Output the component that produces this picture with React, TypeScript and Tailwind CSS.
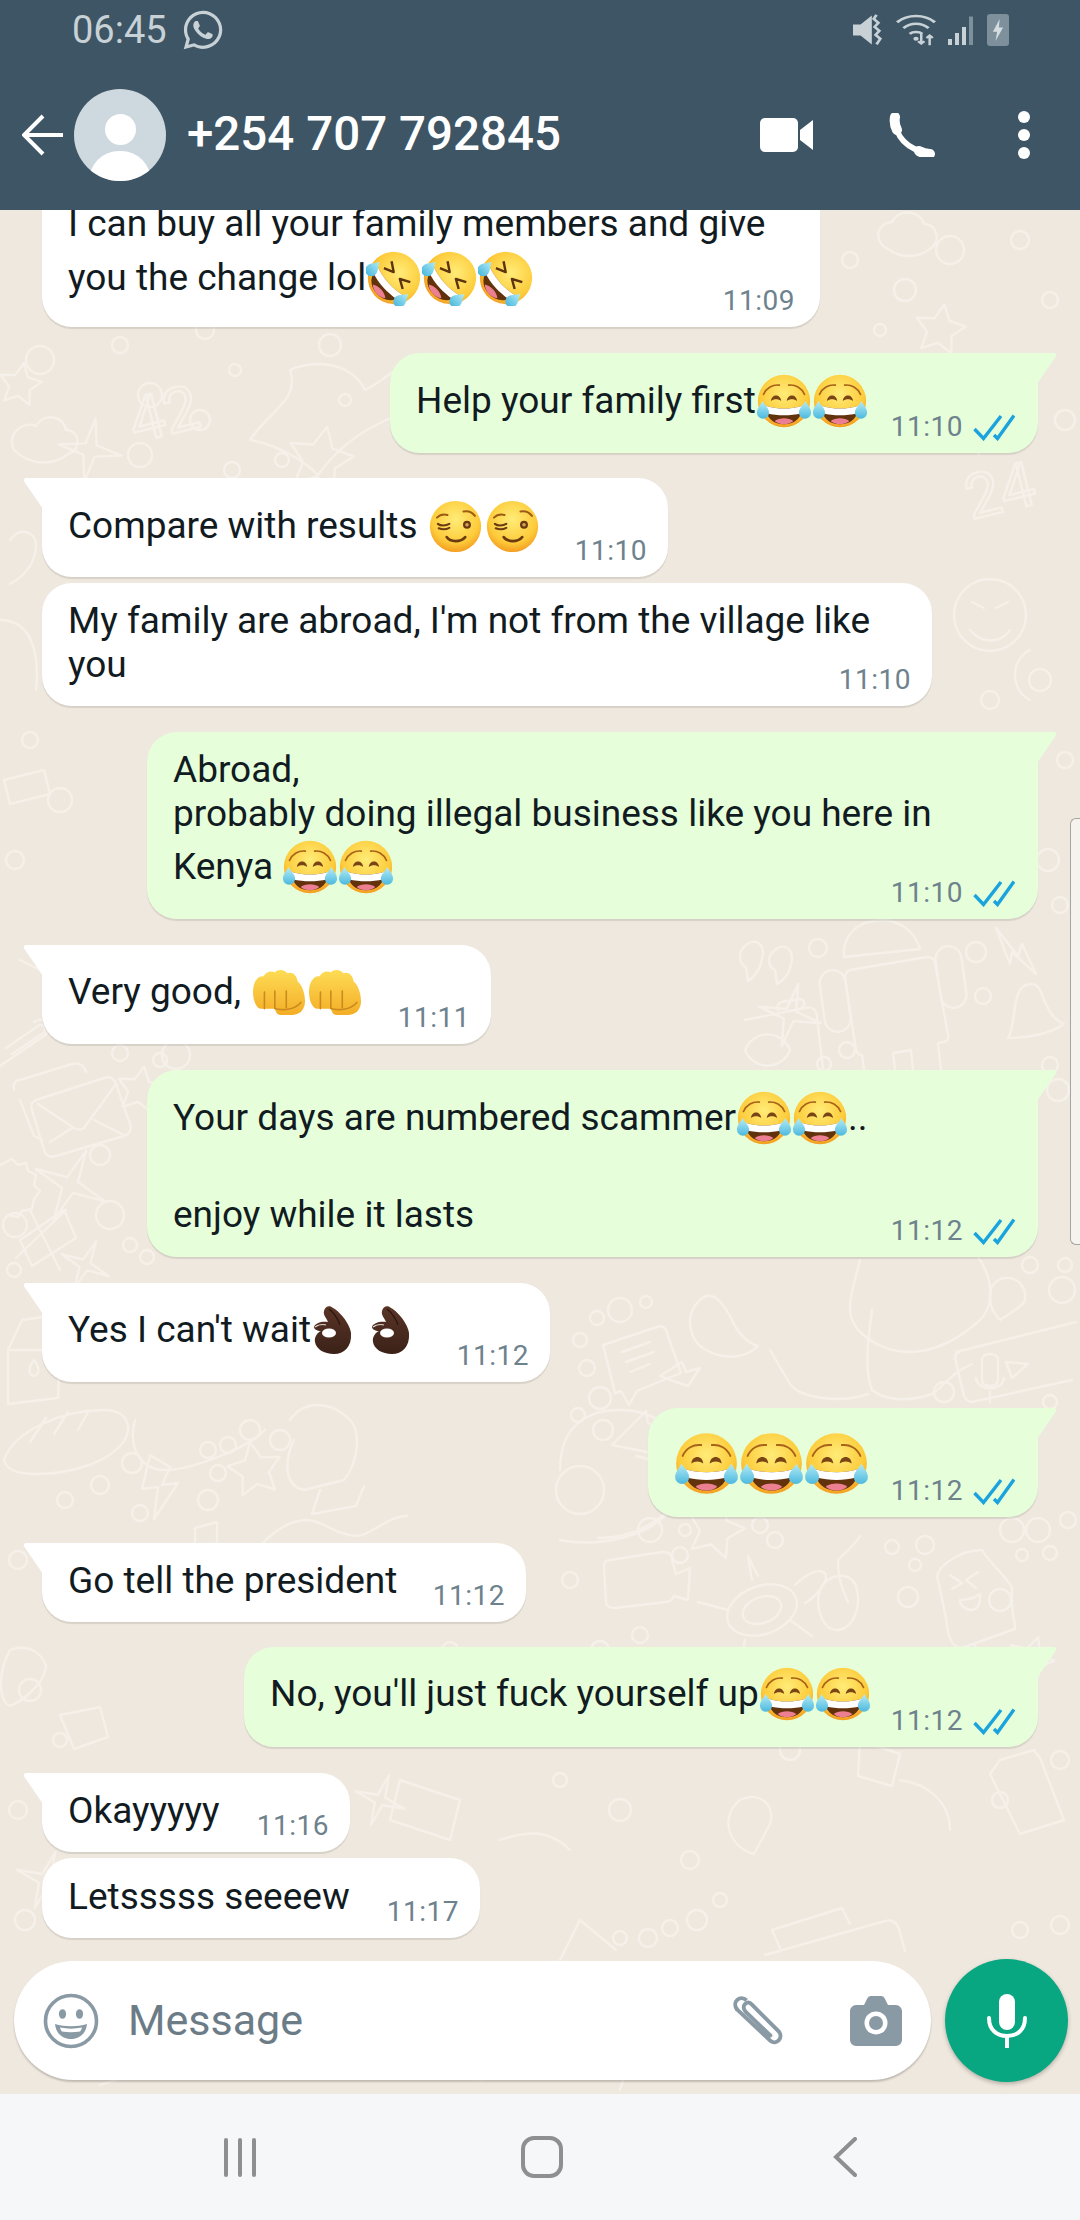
import type { ReactNode } from 'react';
import { FaWhatsapp } from 'react-icons/fa';

const Grad = () => (
  <defs>
    <radialGradient id="faceGrad" cx="0.5" cy="0.36" r="0.68">
      <stop offset="0" stopColor="#ffec78" />
      <stop offset="0.68" stopColor="#fdcb3a" />
      <stop offset="1" stopColor="#f2931b" />
    </radialGradient>
    <linearGradient id="tearGrad" x1="0" y1="0" x2="0" y2="1">
      <stop offset="0" stopColor="#b5ecf5" />
      <stop offset="1" stopColor="#4cb9df" />
    </linearGradient>
    <linearGradient id="fistGrad" x1="0" y1="0" x2="0" y2="1">
      <stop offset="0" stopColor="#fedc55" />
      <stop offset="1" stopColor="#f4ad27" />
    </linearGradient>
    <linearGradient id="okGrad" x1="0" y1="0" x2="0" y2="1">
      <stop offset="0" stopColor="#5a3526" />
      <stop offset="1" stopColor="#3b2118" />
    </linearGradient>
  </defs>
);

function LaughFace({ shut }: { shut?: boolean }) {
  return (
    <>
      <circle cx="30" cy="30" r="28" fill="url(#faceGrad)" />
      {shut ? (
        <path d="M15 20l10 6-10 5M45 20l-10 6 10 5" fill="none" stroke="#5e3410" strokeWidth="2.600" strokeLinejoin="round" />
      ) : (
        <>
          <path d="M8 23c3-7 10-11 17-10M52 23c-3-7-10-11-17-10" fill="none" stroke="#a8621a" strokeWidth="1.800" strokeLinecap="round" />
          <path d="M16 30c.5-8 10.500-8 11 0-3-2.500-8-2.500-11 0zM33 30c.5-8 10.500-8 11 0-3-2.500-8-2.500-11 0z" fill="#7a4516" />
        </>
      )}
      <path d="M10 35c12 4 28 4 40 0 0 12-8 20-20 20S10 47 10 35z" fill="#62320c" />
      <path d="M10 35c12 4 28 4 40 0-.1 3-.6 5.500-1.500 8-12 3-25 3-37 0-.9-2.500-1.400-5-1.500-8z" fill="#fff" />
      <path d="M20 51.500c5-4 15-4 20 0-3 2.500-6 3.500-10 3.500s-7-1-10-3.500z" fill="#ec7f92" />
      <path d="M7 30c2 4 7 8 7 12.500a6.500 6.500 0 0 1-13 0C1 38 5 34 7 30z" fill="url(#tearGrad)" />
      <path d="M53 30c-2 4-7 8-7 12.500a6.500 6.500 0 0 0 13 0C59 38 55 34 53 30z" fill="url(#tearGrad)" />
    </>
  );
}

function Joy({ size = 56 }: { size?: number }) {
  return (
    <svg viewBox="0 0 60 60" width={size} height={size} className="shrink-0">
      <Grad />
      <LaughFace />
    </svg>
  );
}

function Rofl() {
  return (
    <svg viewBox="0 0 60 60" width={56} height={56} className="shrink-0">
      <Grad />
      <g transform="rotate(48 30 30)">
        <LaughFace shut />
      </g>
    </svg>
  );
}

function Smirk() {
  return (
    <svg viewBox="0 0 60 60" width={53} height={53} className="mx-[2px] shrink-0">
      <Grad />
      <circle cx="30" cy="30" r="29" fill="url(#faceGrad)" />
      <path d="M9 20c3-3 8-4 12-3M39 13c5-1 10 1 13 5" fill="none" stroke="#9c5c16" strokeWidth="2.200" strokeLinecap="round" />
      <path d="M10 27c3 2.500 9 2.500 13 0M11 32c4 1.500 8 1.500 12-.5" fill="none" stroke="#6b3a12" strokeWidth="2.400" strokeLinecap="round" />
      <circle cx="43" cy="28" r="4.500" fill="#6b3a12" />
      <circle cx="43" cy="28" r="2" fill="#d9a45a" />
      <path d="M20 42c4 6 16 6 21 0" fill="none" stroke="#6b3a12" strokeWidth="3" strokeLinecap="round" />
    </svg>
  );
}

function Fist() {
  return (
    <svg viewBox="0 0 50 44" width={52} height={46} className="ml-[3px] mr-[1px] shrink-0">
      <Grad />
      <path d="M0 22C0 12 5 6 10 7c2-4 7-6 11-4 3-3 9-3 12 1 4-2 9 1 10 8 4 3 7 11 7 19 0 8-5 13-12 13H26c-2 0-4-2-5-6H7c-4-1-7-8-7-16z" fill="url(#fistGrad)" />
      <path d="M11 22v16M21 21v17M32 21v16M22 38c8 2 18 1 24-6" fill="none" stroke="#c98a1e" strokeWidth="1.500" strokeLinecap="round" />
    </svg>
  );
}

function OkHand() {
  return (
    <svg viewBox="0 0 38 50" width={38} height={50} className="shrink-0">
      <Grad />
      <path d="M10 6c1-5 6-6 9-3 5 2 17 15 18 25 1 14-7 21-17 21-10 0-18-5-19-12-1-5 3-10 6-11-4 0-7-2-7-4 1-4 8-6 14-5-2-5-5-7-4-11z" fill="url(#okGrad)" />
      <path d="M15 4c5 4 9 10 11 16" fill="none" stroke="#2c1710" strokeWidth="1.400" />
      <ellipse cx="15" cy="28" rx="7" ry="4.500" fill="#fff" />
      <path d="M1 22c3-2 8-3 11-2" fill="none" stroke="#e0d6cf" strokeWidth="1.200" />
    </svg>
  );
}

function ReadTicks() {
  return (
    <svg viewBox="0 0 42 27" width={42} height={27} className="shrink-0">
      <path d="M1.500 15l9 9.500L28 2M21 21l3.500 3.500L41 1.500" fill="none" stroke="#1aa3dc" strokeWidth="3.400" />
    </svg>
  );
}

function Time({ children, read }: { children: string; read?: boolean }) {
  return (
    <div className="flex items-center gap-[10px] self-end pb-[12px]">
      <span className="text-[28px] leading-[28px] tracking-[0.5px] text-[#6e828e]">{children}</span>
      {read && <ReadTicks />}
    </div>
  );
}

function Line({ children, className = '' }: { children: ReactNode; className?: string }) {
  return <div className={`flex h-[44px] items-center whitespace-pre pt-[2px] ${className}`}>{children}</div>;
}

// last row of a bubble: the text on the left, the time sits in the bottom corner
function LastLine({ children, time, read, className = '' }: { children: ReactNode; time: string; read?: boolean; className?: string }) {
  return (
    <div className={`flex flex-1 justify-between ${className}`}>
      <Line>{children}</Line>
      <Time read={read}>{time}</Time>
    </div>
  );
}

function Bubble({ sent, tail, className = '', children }: { sent?: boolean; tail?: boolean; className?: string; children: ReactNode }) {
  const tone = sent ? 'self-end bg-[#e6ffda] pl-[26px] pr-[23px]' : 'self-start bg-white pl-[26px] pr-[21px]';
  const corner = tail ? (sent ? 'rounded-tr-none' : 'rounded-tl-none') : '';
  return (
    <div className={`relative flex flex-col rounded-[30px] shadow-[0_2px_1px_rgba(0,0,0,0.1)] ${tone} ${corner} ${className}`}>
      {tail && !sent && (
        <svg viewBox="0 0 20 31" className="absolute left-[-19px] top-0 h-[31px] w-[20px]">
          <path d="M20 0H4C1 0 0 2 1.500 4L20 31z" fill="#fff" />
        </svg>
      )}
      {tail && sent && (
        <svg viewBox="0 0 20 31" className="absolute right-[-19px] top-0 h-[31px] w-[20px]">
          <path d="M0 0h16c3 0 4 2 2.500 4L0 31z" fill="#e6ffda" />
        </svg>
      )}
      {children}
    </div>
  );
}

const dots: [number, number, number][] = [
  [40, 360, 14], [120, 345, 8], [150, 395, 12], [205, 330, 9], [235, 370, 6], [200, 420, 10], [105, 500, 9], [140, 455, 12], [282, 460, 7],
  [330, 345, 11], [345, 400, 6], [232, 470, 8], [850, 260, 8], [905, 290, 11], [950, 250, 14], [1020, 240, 9], [1050, 300, 8], [880, 330, 6],
  [1065, 420, 10], [880, 380, 12], [960, 410, 7], [1040, 680, 11], [1065, 760, 8], [990, 700, 9], [30, 740, 8], [60, 800, 12], [15, 860, 9],
  [1048, 860, 11], [1060, 905, 8], [818, 948, 9], [976, 952, 10], [983, 996, 8], [847, 1050, 8], [824, 1064, 7], [1050, 1065, 8], [1058, 1090, 11],
  [120, 1053, 8], [160, 1060, 7], [176, 1055, 14], [100, 1155, 10], [110, 1215, 14], [15, 1225, 12], [130, 1245, 7], [147, 1257, 7], [14, 1270, 7],
  [250, 1430, 10], [280, 1440, 10], [208, 1450, 8], [228, 1445, 8], [132, 1463, 10], [100, 1485, 9], [65, 1500, 8], [218, 1473, 8], [208, 1500, 10], [140, 1513, 8],
  [170, 1558, 8], [620, 1310, 12], [597, 1318, 7], [646, 1302, 6], [580, 1340, 7], [587, 1368, 8], [600, 1398, 11], [578, 1415, 7], [603, 1430, 10],
  [1030, 1265, 8], [1065, 1265, 7], [1062, 1290, 13], [944, 1392, 10], [1050, 1402, 7], [650, 1530, 12], [685, 1530, 6], [680, 1555, 8], [760, 1525, 8], [775, 1540, 8],
  [892, 1547, 7], [925, 1545, 9], [915, 1565, 6], [1012, 1530, 12], [1038, 1530, 12], [1068, 1520, 8], [1022, 1555, 6], [1050, 1553, 7], [908, 1597, 10], [1000, 1600, 11],
  [570, 1580, 8], [640, 1635, 8], [790, 1750, 10], [1060, 1760, 9], [1000, 1800, 8], [560, 1780, 7], [620, 1810, 11], [690, 1860, 9], [720, 1900, 7],
  [18, 1560, 9], [30, 1690, 11], [60, 1740, 7], [18, 1810, 9], [395, 1975, 8], [620, 1938, 7], [648, 1938, 9], [670, 1928, 8], [697, 1920, 10], [1020, 1930, 8], [1060, 1925, 9],
  [450, 1650, 8], [160, 1790, 12], [600, 1650, 9], [1010, 1710, 8], [25, 1920, 10],
];

function star(cx: number, cy: number, r: number, rot = 0, inner = 0.5, n = 5) {
  const pts: string[] = [];
  for (let i = 0; i < n * 2; i++) {
    const rad = i % 2 === 0 ? r : r * inner;
    const a = (Math.PI * i) / n + (rot * Math.PI) / 180 - Math.PI / 2;
    pts.push(`${(cx + rad * Math.cos(a)).toFixed(1)},${(cy + rad * Math.sin(a)).toFixed(1)}`);
  }
  return pts.join(' ');
}

const stars: [number, number, number, number, number, number][] = [
  [320, 460, 34, 12, 0.5, 5], [90, 450, 32, 10, 0.25, 4], [20, 385, 22, 10, 0.5, 5], [970, 430, 26, 15, 0.5, 5], [70, 1185, 38, 25, 0.22, 4],
  [85, 1265, 26, 25, 0.22, 4], [255, 1470, 28, -10, 0.5, 5], [140, 1090, 24, 10, 0.5, 5], [790, 1015, 32, 15, 0.22, 4], [715, 1530, 30, 15, 0.5, 5],
  [1030, 1660, 24, 20, 0.5, 5], [940, 330, 26, 10, 0.5, 5], [45, 1880, 30, 20, 0.22, 4], [480, 1710, 24, 0, 0.5, 5], [380, 1800, 26, 20, 0.22, 4],
];

function Wallpaper() {
  return (
    <svg viewBox="0 210 1080 1884" className="absolute inset-0 h-full w-full" fill="none" stroke="#f5f0e9" strokeWidth="2.400" strokeLinejoin="round" strokeLinecap="round">
      {dots.map(([x, y, r], i) => (
        <circle key={i} cx={x} cy={y} r={r} />
      ))}
      {stars.map(([x, y, r, rot, inner, n], i) => (
        <polygon key={i} points={star(x, y, r, rot, inner, n)} />
      ))}
      {/* numbers */}
      <text x="128" y="436" fontFamily="Roboto" fontSize="62" transform="rotate(-14 160 410)">42</text>
      <text x="965" y="512" fontFamily="Roboto" fontSize="62" transform="rotate(-14 1000 490)">24</text>
      {/* rocket */}
      <path d="M250 440c20-30 50-40 40-70 20-10 60-10 75 20 20-10 25-20 45-25l-12 50c-25 10-55 25-80 60-15-15-40-30-68-35z" />
      {/* clouds */}
      <path d="M14 450c-8-15 8-30 22-24 8-14 28-10 30 4 14 0 16 20 2 24-12 10-36 14-54-4z" />
      <path d="M150 500c20-18 46-22 60-12 14-6 34 0 40 22" />
      <path d="M890 250c-16-6-16-26 2-28 6-14 28-12 32 2 14 0 18 20 4 26-10 8-28 8-38 0z" />
      {/* smiley */}
      <circle cx="990" cy="615" r="36" />
      <path d="M970 630c12 14 30 14 40 0M972 602l12 6M1008 602l-12 6" />
      {/* android */}
      <path d="M850 970l77-13c4 0 7 2 8 6l13 72c1 4-1 7-5 7l-5 1 4 36c1 16-26 16-28 1l-3-30-18 3 4 34c1 16-28 18-30 2l-5-34c-3 0-5-2-6-5l-11-72c0-4 2-7 5-8z" />
      <rect x="822" y="970" width="26" height="62" rx="13" transform="rotate(-8 835 1000)" />
      <rect x="938" y="946" width="26" height="62" rx="13" transform="rotate(-8 951 977)" />
      <path d="M844 957c-2-20 12-34 30-36 22-4 40 8 46 28z" />
      <path d="M745 1020l60-12c8-2 12 2 12 10l6 50M778 1010c-2-6 2-8 8-9l14-2c4 0 6 6 2 8M745 1050a24 24 0 0 0 45 0 24 24 0 0 0-45 0z" />
      <path d="M1020 990c6-8 16-8 20 0 6 14 10 28 24 34-14 10-38 14-56 14 8-14 4-34 12-48z" />
      <path d="M746 945c10-8 20 0 16 14-2 12-10 20-14 22l-2-14c-8-4-8-16 0-22zM775 950c10-8 20 0 16 14-2 12-10 18-14 20l-2-14c-8-4-8-14 0-20z" />
      <path d="M996 928l22 28 4-12 14 30-24-22-2 12z" />
      {/* envelopes */}
      <path d="M14 1090c-2-6 2-10 6-10l52-16c8-2 12 2 14 8M20 1100l14 36 8 4" />
      <path d="M36 1100l68-22c6-2 10 0 12 6l14 40c2 6 0 10-6 12l-68 20c-6 2-10 0-12-6l-12-40c-2-6 0-8 4-10zM38 1104l36 24c4 2 8 2 10 0l32-44M50 1142l22-14M94 1120l28 14" />
      {/* paperclip */}
      <path d="M6 1048l32-22c6-4 10 4 4 8l-30 20M0 1066l44-30c12-8 2-22-10-14" />
      {/* gear */}
      <path d="M0 1165l12-6 6 6 8-2 2 8 8 4-2 10 6 6-6 8-2 10-10 2-4 6-10-2" />
      {/* scissors */}
      <path d="M20 1240l44-30 12 28-44 28zM30 1210l30 60M66 1210l-50 48" />
      {/* milk box */}
      <path d="M8 1350l14-30 28-4 10 26-2 56-50 6zM8 1350h50M34 1360c-6 8-6 14 0 16 6-2 6-8 0-16z" />
      {/* bread */}
      <path d="M4 1460c10-30 60-50 100-50 28 0 30 24 14 38-16 16-50 26-82 26-18 0-30-4-32-14zM30 1442l16-24M54 1434l14-22M78 1430l10-18" />
      {/* bolt */}
      <path d="M150 1455l20 12-8 18 16-2-24 36 4-32-16 2z" />
      {/* music note */}
      <path d="M195 1556v-28l22-6v24M195 1556c-6-4-14 0-12 6 4 6 14 2 12-6zM217 1546c-6-4-14 0-12 6 4 6 14 2 12-6z" />
      {/* hand */}
      <path d="M245 1570c14-30 40-50 62-50 16 0 30 16 50 16 14 0 30-20 50-20" />
      {/* big mug */}
      <path d="M135 1420c-8 30 8 50 30 50 24 0 80-20 100-40M290 1420c14-20 40-20 60 0 10 10 10 40-6 60l-40 10c-20-4-20-30-10-50M320 1490l-8 24 44-8 8-20" />
      {/* camera and donut */}
      <path d="M560 1470c0-50 34-60 60-60 38 0 68 26 68 62 0 30-40 66-90 66" />
      <circle cx="580" cy="1490" r="24" />
      {/* chat + forward */}
      <path d="M603 1345l54-18c6-2 8 0 10 6l14 40-20 8-24 10-8 14-8-14-6 2zM622 1352l28-10M626 1362l28-10M630 1372l20-8M660 1376l22-14 4 10 14-4-12 18-12-4z" />
      {/* fingers */}
      <path d="M700 1300c10-10 20-2 30 16 6 14 14 26 28 30-10 10-30 16-52 4-18-10-22-36-6-50zM770 1350l20 34c10 14 50 20 78 10" />
      <path d="M872 1310c-4 30-8 60 0 80 10 8 30 14 60 4 10-6 20-22 40-30" />
      <path d="M860 1260c-10 40-20 60 10 80 30 20 70 16 110-20 20-20 10-60-20-80" />
      {/* voice card */}
      <path d="M956 1352l120-30M960 1352c-4 0-6 4-4 10l8 34c2 4 4 6 8 6l100-22" />
      <path d="M982 1360v20c0 8 16 8 16 0v-20c0-8-16-8-16 0zM976 1378c2 14 26 14 28 0M990 1392v10M1006 1362l22 2-16 14z" />
      {/* pin */}
      <path d="M1000 1320c-14-14-14-38 4-42 18-2 24 16 20 24-4 6-12 10-24 18z" />
      {/* fox */}
      <path d="M612 1445l34-34 2 12 18 8-4 24-30-6z" />
      {/* donut */}
      <path d="M560 1540c40 8 90-4 110-30 8-20-6-50-34-54" />
      {/* video card */}
      <path d="M610 1560l52-8c6 0 10 2 10 8l4 14 14-6-2 32-14-4c-2 4-4 6-8 6l-52 6c-6 0-8-2-8-6l-2-36c0-4 2-6 6-6z" />
      {/* turtle */}
      <ellipse cx="762" cy="1610" rx="36" ry="24" transform="rotate(-20 762 1610)" />
      <ellipse cx="762" cy="1610" rx="20" ry="13" transform="rotate(-20 762 1610)" />
      <path d="M795 1585c8-8 22-18 30-12 4 6-6 22-20 30M728 1610l-30-8M745 1640l-4 20M790 1620l22 16M752 1580l-4-24 10 20" />
      {/* cherry */}
      <path d="M820 1590c6-16 30-20 36-4 6 20-2 42-18 44-14 2-24-22-18-40zM838 1560c0 16 2 24 10 42M838 1560c8-8 16-14 22-24" />
      {/* popsicle */}
      <path d="M938 1580c-6-10 20-30 44-30 8 14 32 34 30 40-2 30 8 40 0 40l-50 18c-10 0-14-10-16-30zM950 1575l12 8-10 6M978 1572l-12 8 10 8M960 1600c8 0 14-2 20-6 0 8 0 14-8 16-6 0-12-4-12-10zM975 1645l6 28" />
      {/* bottom doodles */}
      <path d="M765 1955l120-34c8-2 12 2 14 8l6 22M780 1948l-8-18 70-22 8 16" />
      <path d="M600 1700c30-20 50-20 70-4 16 14 4 40-14 44-20 4-56-20-56-40z" />
      <path d="M60 1715l40-8 8 30-34 12zM160 1830c30-14 60-8 80 14M500 1840c30-10 50-10 70 10" />
      <path d="M10 1650c16-6 30 0 36 16-2 20-26 36-36 40-10-4-14-30 0-56z" />
      <path d="M1000 1760l34-10 6 8 24 62-44 14-30-60z" />
      <path d="M560 1960l20-40 36 30M710 1985l40 30M480 2080l60-30M100 2085l100-32M620 2090l10-30" />
      <path d="M740 1800c20-10 36 6 30 24l-16 30c-24-6-36-36-14-54z" />
      <path d="M860 1740l40 14-8 32-34-10zM900 1780c30 4 50 24 50 50" />
      <path d="M400 1780l60 20-10 40-60-20z" />
      <path d="M960 820c20-20 40-10 50 4l-10 40-50 6zM880 740l60 10-4 24-58-8zM1030 650c-20 10-20 40 0 50" />
      <path d="M10 540c10-14 26-8 26 4 0 16-8 30-26 40M0 620c30 0 40 30 36 70M20 960l40 20M4 780l40-10 6 24-40 10z" />
    </svg>
  );
}

function SmileIcon() {
  return (
    <svg viewBox="0 0 56 56" className="h-[56px] w-[56px]">
      <circle cx="28" cy="28" r="25.500" fill="none" stroke="#8a9aa5" strokeWidth="3.600" />
      <ellipse cx="19.500" cy="21" rx="3.600" ry="4.800" fill="#8a9aa5" />
      <ellipse cx="36.500" cy="21" rx="3.600" ry="4.800" fill="#8a9aa5" />
      <path d="M12 31c10 3 22 3 32 0-1 10-8 15-16 15s-15-5-16-15z" fill="#8a9aa5" />
      <path d="M17 34.500c7 1.500 15 1.500 22 0-.5 2-1 3-2 4-6 1-12 1-18 0-1-1-1.500-2-2-4z" fill="#fff" />
    </svg>
  );
}

function ClipIcon() {
  return (
    <svg viewBox="0 0 56 50" className="h-[52px] w-[58px]">
      <path d="M7 14l32 30c6 5 13-3 8-9L21 9c-4-5-11 1-6 7l24 23" fill="none" stroke="#8a9aa5" strokeWidth="3.800" strokeLinecap="round" />
      <path d="M7 14c-6-7 3-15 9-9" fill="none" stroke="#8a9aa5" strokeWidth="3.800" />
    </svg>
  );
}

function CameraIcon() {
  return (
    <svg viewBox="0 0 52 50" className="h-[50px] w-[52px]">
      <path d="M6 9h8l3-6c1-2 2-3 4-3h10c2 0 3 1 4 3l3 6h8c3 0 6 3 6 6v29c0 3-3 6-6 6H6c-3 0-6-3-6-6V15c0-3 3-6 6-6z" fill="#8a9aa5" />
      <circle cx="26" cy="27" r="11.500" fill="#fff" />
      <circle cx="26" cy="27" r="7" fill="#8a9aa5" />
    </svg>
  );
}

export default function App() {
  return (
    <div className="flex h-[2220px] w-[1080px] flex-col overflow-hidden bg-[#efe8de] font-['Roboto',sans-serif] text-[37px] text-[#111b21]">
      {/* app bar */}
      <header className="relative z-20 flex h-[210px] shrink-0 flex-col bg-[#3e5565]">
        <div className="flex h-[60px] items-center justify-between pl-[72px] pr-[71px] text-[#c7d1d6]">
          <div className="flex items-center gap-[14px]">
            <span className="text-[38px] leading-none">06:45</span>
            <FaWhatsapp className="h-[44px] w-[44px]" />
          </div>
          <div className="flex items-center">
            <svg viewBox="0 0 34 40" preserveAspectRatio="none" className="h-[32px] w-[32px]" fill="#c7d1d6">
              <path d="M0 13h8L20 2v36L8 27H0z" />
              <path d="M25 1l-3 5 5 5-4 5 5 5-4 5 5 5-4 7" fill="none" stroke="#c7d1d6" strokeWidth="3" />
            </svg>
            <svg viewBox="0 0 40 40" preserveAspectRatio="none" className="ml-[10px] h-[33px] w-[42px]" fill="none" stroke="#c7d1d6" strokeWidth="3">
              <path d="M2 10c10-10 26-10 36 0M8 17c7-7 17-7 24 0M14 24c3-3 9-3 12 0" />
              <circle cx="20" cy="30" r="2.500" fill="#c7d1d6" stroke="none" />
              <path d="M25 24v12M22 33l3 3 3-3M33 38V26M30 29l3-3 3 3" strokeWidth="2.400" />
            </svg>
            <svg viewBox="0 0 28 40" preserveAspectRatio="none" className="ml-[10px] h-[30px] w-[28px]">
              <path d="M1 32h4v8H1zM8 24h4v16H8zM15 16h4v24h-4z" fill="#c7d1d6" />
              <path d="M22 2h4v38h-4z" fill="#7d909b" />
            </svg>
            <div className="ml-[12px] flex h-[32px] w-[22px] items-center justify-center rounded-[3px] bg-[#7d909b]">
              <svg viewBox="0 0 14 26" className="h-[22px] w-[12px]">
                <path d="M9 0L1 15h5l-2 11 9-16H8z" fill="#d5dde1" />
              </svg>
            </div>
          </div>
        </div>
        <div className="flex flex-1 items-center pl-[22px] pr-[50px]">
          <svg viewBox="0 0 42 42" className="h-[42px] w-[42px]" fill="none" stroke="#fff" strokeWidth="4">
            <path d="M41 21H3M21 2L2 21l19 19" />
          </svg>
          <div className="relative ml-[10px] h-[92px] w-[92px] shrink-0 overflow-hidden rounded-full bg-[#ced8df]">
            <div className="mx-auto mt-[25px] h-[31px] w-[31px] rounded-full bg-white" />
            <div className="mx-auto mt-[6px] h-[60px] w-[62px] rounded-full bg-white" />
          </div>
          <span className="ml-[21px] flex-1 text-[47.500px] font-medium leading-none text-white">+254 707 792845</span>
          <svg viewBox="0 0 53 34" className="h-[34px] w-[53px]" fill="#fff">
            <rect width="38" height="34" rx="5" />
            <path d="M40 12l13-10v30L40 22z" />
          </svg>
          <svg viewBox="0 0 46 44" className="ml-[76px] mr-[2px] h-[44px] w-[46px]" fill="none" stroke="#fff" strokeLinecap="round">
            <path d="M6 6c0 17 12 31 34 34" strokeWidth="5.500" />
            <path d="M6 4c-1 5 0 9 2 13M30 38c3 2 7 3 11 3" strokeWidth="10" />
          </svg>
          <div className="ml-[81px] flex flex-col gap-[6px]">
            <div className="h-[12px] w-[12px] rounded-full bg-white" />
            <div className="h-[12px] w-[12px] rounded-full bg-white" />
            <div className="h-[12px] w-[12px] rounded-full bg-white" />
          </div>
        </div>
      </header>

      {/* chat */}
      <main className="relative flex h-[1884px] shrink-0 flex-col overflow-hidden">
        <Wallpaper />
        <div className="relative flex flex-1 flex-col pl-[42px] pr-[42px]">
          <Bubble className="mt-[-50px] h-[167px] w-[778px] pt-[41px]">
            <Line>I can buy all your family members and give</Line>
            <LastLine time="11:09" className="mt-[10px] pr-[4px]">
              you the change lol
              <Rofl />
              <Rofl />
              <Rofl />
            </LastLine>
          </Bubble>
          <Bubble sent tail className="mt-[26px] h-[100px] w-[648px] pt-[25px]">
            <LastLine time="11:10" read>
              Help your family first
              <Joy />
              <Joy />
            </LastLine>
          </Bubble>
          <Bubble tail className="mt-[25px] h-[99px] w-[626px] pt-[25px]">
            <LastLine time="11:10">
              {'Compare with results '}
              <Smirk />
              <Smirk />
            </LastLine>
          </Bubble>
          <Bubble className="mt-[6px] h-[123px] w-[890px] pt-[15px]">
            <Line>My family are abroad, I'm not from the village like</Line>
            <LastLine time="11:10">you</LastLine>
          </Bubble>
          <Bubble sent tail className="mt-[26px] h-[187px] w-[891px] pt-[15px]">
            <Line>Abroad,</Line>
            <Line>probably doing illegal business like you here in</Line>
            <LastLine time="11:10" read className="mt-[9px]">
              {'Kenya '}
              <Joy />
              <Joy />
            </LastLine>
          </Bubble>
          <Bubble tail className="mt-[26px] h-[99px] w-[449px] pt-[24px]">
            <LastLine time="11:11">
              {'Very good, '}
              <Fist />
              <Fist />
            </LastLine>
          </Bubble>
          <Bubble sent tail className="mt-[26px] h-[187px] w-[891px] pt-[25px]">
            <Line>
              Your days are numbered scammer
              <Joy />
              <Joy />
              ..
            </Line>
            <LastLine time="11:12" read className="mt-[53px]">
              enjoy while it lasts
            </LastLine>
          </Bubble>
          <Bubble tail className="mt-[26px] h-[99px] w-[508px] pt-[24px]">
            <LastLine time="11:12">
              Yes I can't wait
              <span className="w-[3px]" />
              <OkHand />
              <span className="w-[20px]" />
              <OkHand />
            </LastLine>
          </Bubble>
          <Bubble sent tail className="mt-[26px] h-[109px] w-[390px] pt-[32px]">
            <LastLine time="11:12" read>
              <Joy size={65} />
              <Joy size={65} />
              <Joy size={65} />
            </LastLine>
          </Bubble>
          <Bubble tail className="mt-[26px] h-[79px] w-[484px] pt-[15px]">
            <LastLine time="11:12">Go tell the president</LastLine>
          </Bubble>
          <Bubble sent tail className="mt-[25px] h-[100px] w-[794px] pt-[24px]">
            <LastLine time="11:12" read>
              No, you'll just fuck yourself up
              <Joy />
              <Joy />
            </LastLine>
          </Bubble>
          <Bubble tail className="mt-[26px] h-[79px] w-[308px] pt-[15px]">
            <LastLine time="11:16">Okayyyyy</LastLine>
          </Bubble>
          <Bubble className="mt-[6px] h-[80px] w-[438px] pt-[16px]">
            <LastLine time="11:17">Letsssss seeeew</LastLine>
          </Bubble>
        </div>

        {/* composer */}
        <div className="relative mb-[12px] flex items-center pl-[14px] pr-[12px]">
          <div className="flex h-[119px] w-[918px] items-center rounded-full bg-white pl-[29px] pr-[29px] shadow-[0_2px_2px_rgba(0,0,0,0.2)]">
            <SmileIcon />
            <span className="ml-[29px] flex-1 text-[43px] leading-none text-[#6b7c87]">Message</span>
            <ClipIcon />
            <div className="ml-[62px]">
              <CameraIcon />
            </div>
          </div>
          <div className="ml-[14px] flex h-[123px] w-[123px] items-center justify-center rounded-full bg-[#09a781] shadow-[0_2px_4px_rgba(0,0,0,0.25)]">
            <svg viewBox="0 0 40 54" className="h-[54px] w-[40px]" fill="none" stroke="#fff">
              <rect x="12" y="0" width="16" height="36" rx="8" fill="#fff" stroke="none" />
              <path d="M2 24c0 12 8 18 18 18s18-6 18-18M20 42v12" strokeWidth="4" strokeLinecap="round" />
            </svg>
          </div>
        </div>
      </main>

      {/* system nav */}
      <nav className="relative z-10 grid h-[126px] shrink-0 grid-cols-3 items-center bg-[#f5f7f9] pl-[89px] pr-[84px]">
        <div className="flex justify-center gap-[10px]">
          <div className="h-[39px] w-[4px] rounded-full bg-[#8e8f91]" />
          <div className="h-[39px] w-[4px] rounded-full bg-[#8e8f91]" />
          <div className="h-[39px] w-[4px] rounded-full bg-[#8e8f91]" />
        </div>
        <div className="flex justify-center">
          <div className="h-[42px] w-[42px] rounded-[13px] border-[4px] border-[#8e8f91]" />
        </div>
        <div className="flex justify-center">
          <svg viewBox="0 0 24 40" className="h-[40px] w-[24px]" fill="none" stroke="#8e8f91" strokeWidth="4" strokeLinecap="round">
            <path d="M22 2L3 20l19 18" />
          </svg>
        </div>
      </nav>

      {/* edge panel handle */}
      <div className="absolute right-0 top-[818px] z-10 h-[427px] w-[10px] rounded-l-[6px] border border-r-0 border-[#a5a5a3] bg-[#f6f3ee]" />
    </div>
  );
}
